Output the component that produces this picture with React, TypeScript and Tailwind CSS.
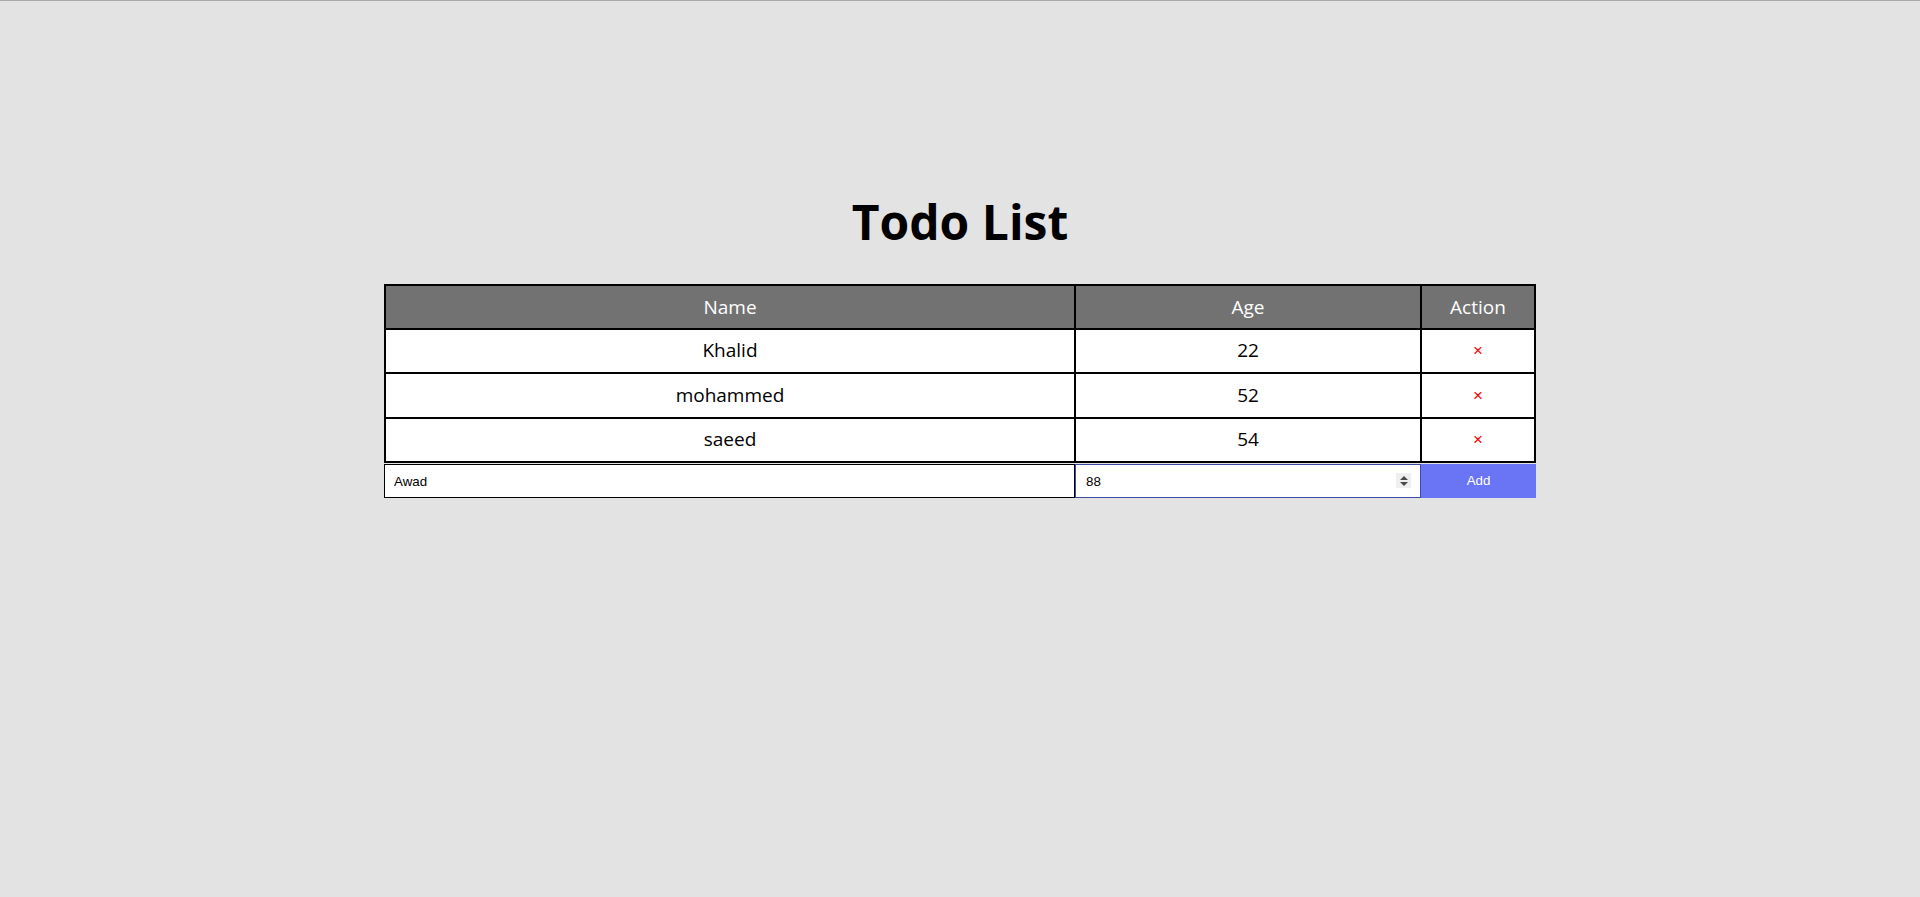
import React from "react";

const rows = [
  { name: "Khalid", age: 22 },
  { name: "mohammed", age: 52 },
  { name: "saeed", age: 54 },
];

const cellFont = "font-['Liberation_Sans_Narrow','Open_Sans',sans-serif]";

export default function App() {
  return (
    <div className="min-h-[897px] w-full bg-[#e3e3e3] border-t border-[#a9a9a9] flex flex-col items-center">
      <h1 className="mt-[191px] text-[48px] leading-[60px] font-bold text-black font-['Open_Sans',sans-serif]">
        Todo List
      </h1>
      <div className="mt-[32px] w-[1152px] border border-black">
        <div className={`grid grid-cols-[690px_346px_114px] ${cellFont}`}>
          {["Name", "Age", "Action"].map((h) => (
            <div
              key={h}
              className="h-[43.5px] border border-black bg-[#727273] text-white text-[19px] flex items-center justify-center"
            >
              {h}
            </div>
          ))}
          {rows.map((r) => (
            <React.Fragment key={r.name}>
              <div className="h-[44.5px] border border-black bg-white text-black text-[19px] flex items-center justify-center pb-px">
                {r.name}
              </div>
              <div className="h-[44.5px] border border-black bg-white text-black text-[19px] flex items-center justify-center pb-px">
                {r.age}
              </div>
              <div className="h-[44.5px] border border-black bg-white flex items-center justify-center">
                <span className="text-[#ff0000] text-[17px] leading-none font-['Liberation_Sans',sans-serif]">×</span>
              </div>
            </React.Fragment>
          ))}
        </div>
      </div>
      <div className="mt-px w-[1152px] h-[34px] flex font-['Liberation_Sans',sans-serif] text-[13.33px]">
        <input
          readOnly
          value="Awad"
          className="w-[691px] h-full bg-white border border-black pl-[9px] text-black outline-none"
        />
        <div className="relative w-[346px] h-full">
          <input
            readOnly
            value="88"
            className="w-full h-full bg-white border border-[#3b4ba8] pl-[10px] text-black outline-none"
          />
          <div className="absolute right-[10px] top-[9px] w-[15px] h-[15px] bg-[#efefef] flex flex-col items-center justify-center gap-[2px]">
            <svg width="8" height="4" viewBox="0 0 8 4">
              <path d="M0 4 L4 0 L8 4 Z" fill="#4a4a4a" />
            </svg>
            <svg width="8" height="4" viewBox="0 0 8 4">
              <path d="M0 0 L8 0 L4 4 Z" fill="#4a4a4a" />
            </svg>
          </div>
        </div>
        <button className="w-[115px] h-full bg-[#6a75f5] text-white text-[13.33px] flex items-center justify-center">
          Add
        </button>
      </div>
    </div>
  );
}
